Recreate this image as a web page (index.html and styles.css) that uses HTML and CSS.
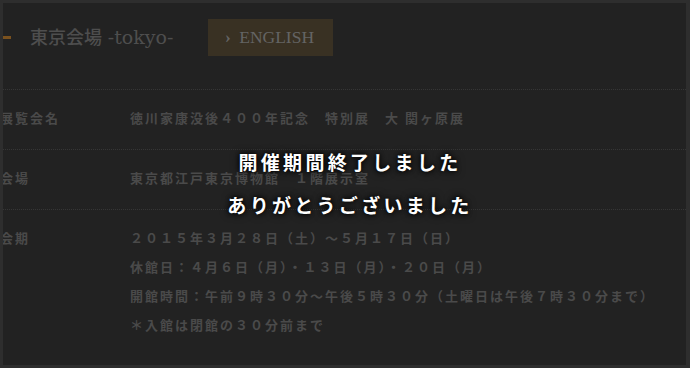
FILE: index.html
```html
<!DOCTYPE html>
<html lang="ja">
<head>
<meta charset="utf-8">
<title>東京会場</title>
<link rel="stylesheet" href="styles.css">
</head>
<body>
<div class="frame">
  <div class="header">
    <span class="mark"></span>
    <h2 class="title">東京会場 <span class="latin">-tokyo-</span></h2>
    <a class="btn" href="#"><span class="chev">›</span> ENGLISH</a>
  </div>
  <div class="info">
    <div class="row">
      <div class="label">展覧会名</div>
      <div class="value">徳川家康没後４００年記念　特別展　大 関ヶ原展</div>
    </div>
    <div class="row">
      <div class="label">会場</div>
      <div class="value">東京都江戸東京博物館　１階展示室</div>
    </div>
    <div class="row">
      <div class="label">会期</div>
      <div class="value">
        <p>２０１５年３月２８日（土）～５月１７日（日）</p>
        <p>休館日：４月６日（月）・１３日（月）・２０日（月）</p>
        <p>開館時間：午前９時３０分～午後５時３０分（土曜日は午後７時３０分まで）</p>
        <p>＊入館は閉館の３０分前まで</p>
      </div>
    </div>
  </div>
  <div class="overlay">
    <p class="msg">開催期間終了しました</p>
    <p class="msg">ありがとうございました</p>
  </div>
</div>
</body>
</html>
```

FILE: styles.css
```css
html, body {
  margin: 0;
  padding: 0;
  background: #2e2e2e;
}
.frame {
  position: relative;
  width: 690px;
  height: 368px;
  box-sizing: border-box;
  border-style: solid;
  border-color: #2e2e2e;
  border-width: 3px 4px 3px 3px;
  background: #222222;
  overflow: hidden;
  font-family: "Noto Sans CJK JP", sans-serif;
}
.header {
  height: 86px;
  box-sizing: border-box;
  padding-top: 16px;
  display: flex;
  align-items: flex-start;
}
.mark {
  width: 8px;
  height: 3px;
  margin-top: 17px;
  background: #7a511e;
}
.title {
  margin: 0 0 0 19px;
  width: 178px;
  font-size: 18px;
  line-height: 37px;
  font-weight: 500;
  color: #4e4e4e;
  font-family: "DejaVu Serif", "Noto Sans CJK JP", serif;
  white-space: nowrap;
}
.title .latin {
  font-weight: normal;
  font-size: 19px;
}
.btn {
  width: 125px;
  height: 37px;
  box-sizing: border-box;
  padding-left: 17px;
  background: #393123;
  color: #646464;
  font-family: "Liberation Serif", serif;
  font-size: 17.5px;
  line-height: 37px;
  text-decoration: none;
  white-space: nowrap;
}
.chev {
  margin-right: 4px;
  font-weight: bold;
}
.row {
  display: flex;
  border-top: 1px dotted #363636;
  padding: 13px 0 17px;
  margin-left: -3px;
  font-size: 13px;
  line-height: 29px;
  letter-spacing: 2px;
  color: #4a4a4a;
  font-weight: bold;
}
.label {
  width: 130px;
  flex: none;
}
.value p {
  margin: 0;
  white-space: nowrap;
}
.overlay {
  position: absolute;
  top: 0;
  left: 0;
  right: 0;
  padding-top: 137px;
  padding-left: 11px;
  display: flex;
  flex-direction: column;
  align-items: center;
}
.msg {
  margin: 0;
  color: #ffffff;
  font-size: 19px;
  line-height: 43px;
  letter-spacing: 3.3px;
  font-weight: bold;
  text-shadow: 0 0 4px #000, 0 0 8px #000;
  white-space: nowrap;
}
```
